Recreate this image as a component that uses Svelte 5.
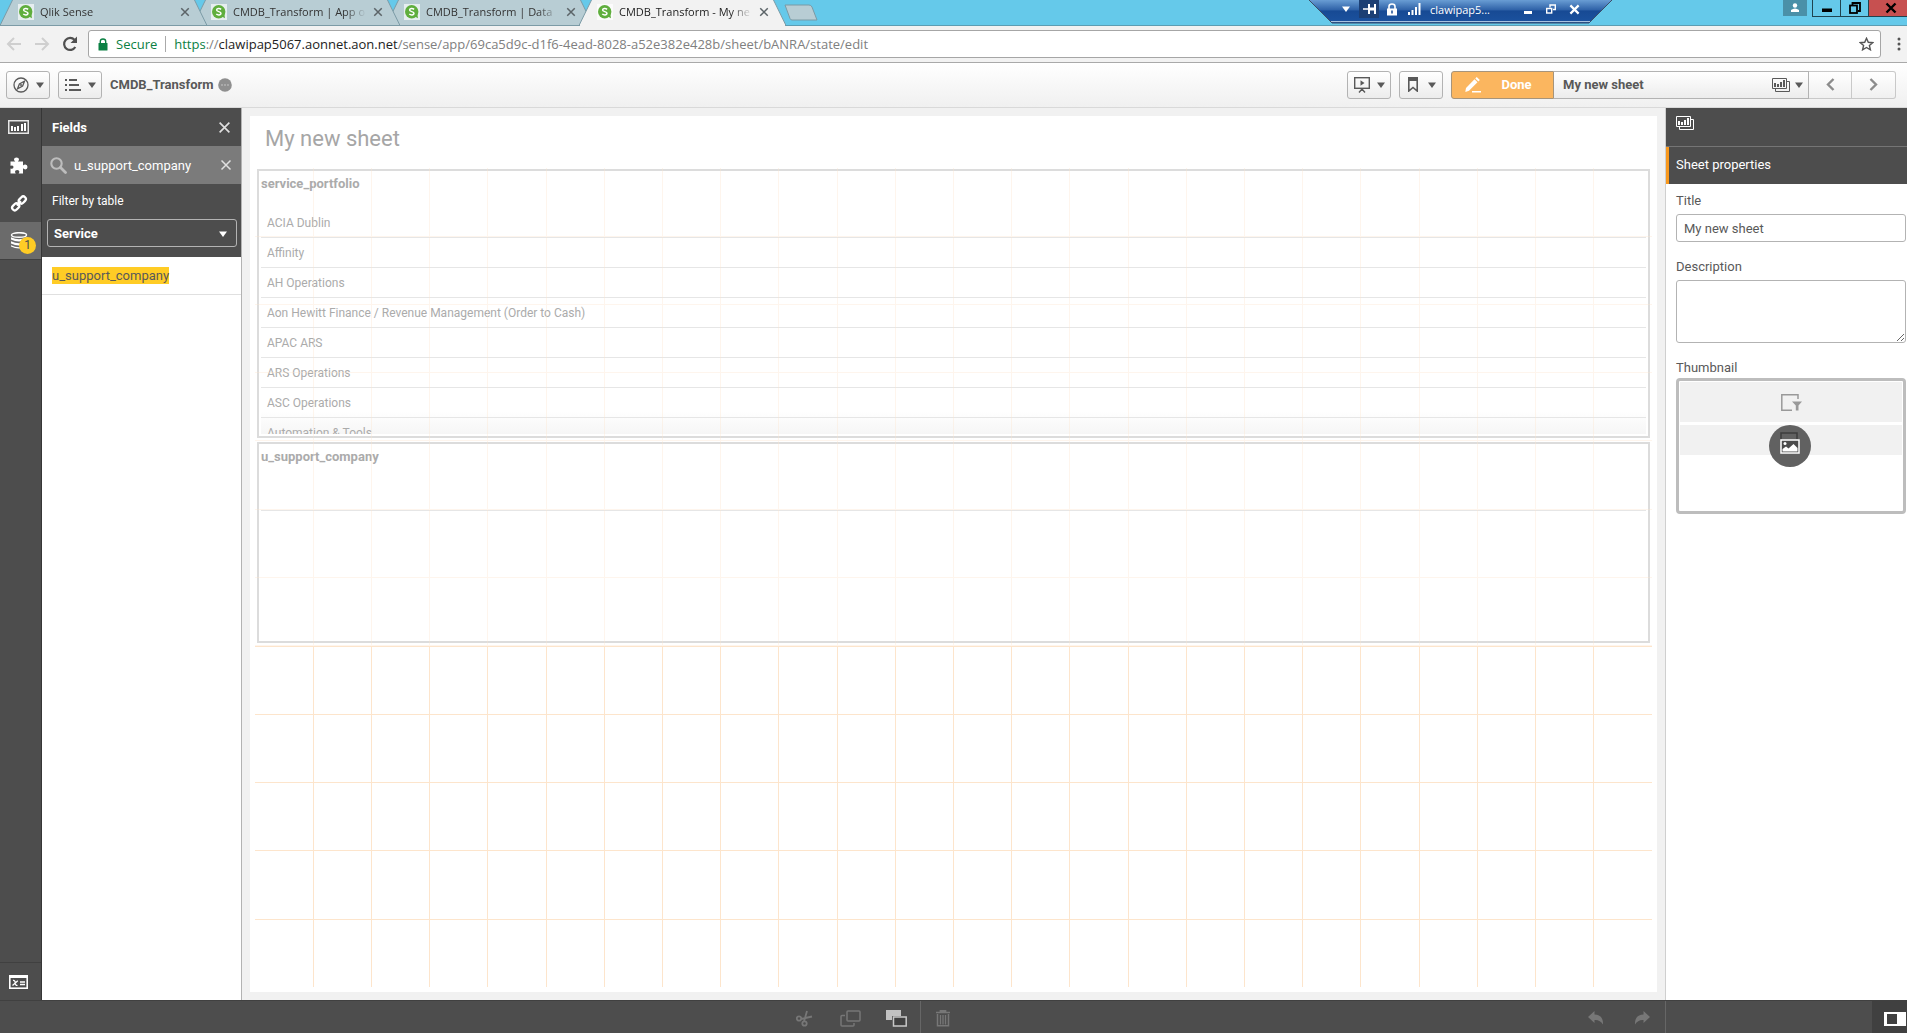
<script>
  const tabs = [
    { title: 'Qlik Sense', active: false },
    { title: 'CMDB_Transform | App o', active: false },
    { title: 'CMDB_Transform | Data', active: false },
    { title: 'CMDB_Transform - My ne', active: true }
  ];
  const portfolio = [
    'ACIA Dublin',
    'Affinity',
    'AH Operations',
    'Aon Hewitt Finance / Revenue Management (Order to Cash)',
    'APAC ARS',
    'ARS Operations',
    'ASC Operations',
    'Automation & Tools'
  ];
  const columns = 24;
  const rows = 12;
  const colLines = Array.from({ length: columns - 1 }, (_, i) => ((i + 1) * 100) / columns);
  const rowLines = Array.from({ length: rows - 1 }, (_, i) => ((i + 1) * 100) / rows);

  let search = $state('u_support_company');
  let title = $state('My new sheet');
  let description = $state('');
</script>

{#snippet caret()}
  <svg class="caret" width="8" height="6" viewBox="0 0 8 6"><path d="M0 0.5H8L4 6Z" fill="currentColor" /></svg>
{/snippet}

{#snippet cross(size, weight)}
  <svg width={size} height={size} viewBox="0 0 12 12"><path d="M1.500 1.500L10.500 10.500M10.500 1.500L1.500 10.500" stroke="currentColor" stroke-width={weight} fill="none" /></svg>
{/snippet}

{#snippet sheets()}
  <svg width="18" height="14" viewBox="0 0 18 14" fill="none" stroke="currentColor">
    <path d="M0.500 0.500H14.500V10.500H0.500Z" />
    <path d="M15 3.500H17.500V13.500H3.500V11" />
    <path d="M3 9V5M6 9V6M9 9V4M12 9V2" stroke-width="2" />
  </svg>
{/snippet}

<div class="app">
  <div class="tabstrip">
    <nav class="tabs" aria-label="Browser tabs">
      {#each tabs as tab}
        <div class="tab" class:active={tab.active}>
          <svg class="shape" viewBox="0 0 207 26" preserveAspectRatio="none">
            <path d="M0 25.500L13 -1H194L207 25.500Z" />
          </svg>
          <svg class="favicon" width="16" height="16" viewBox="0 0 16 16">
            <rect width="16" height="16" fill="#fff" opacity="0.650" />
            <circle cx="7.700" cy="7.700" r="6.700" fill="#5fae3d" />
            <path d="M9 11.500L14 14.300L13 8Z" fill="#5fae3d" />
            <path d="M10.100 5.300C8.700 4.200 5.600 4.200 5.600 6C5.600 8 10 7.200 10 9.300C10 11.300 6.700 11.300 5.300 10" stroke="#fff" stroke-width="1.500" fill="none" />
          </svg>
          <span class="tab-title">{tab.title}</span>
          <button class="tab-close" aria-label="Close tab">{@render cross(10, 1.8)}</button>
        </div>
      {/each}
      <button class="new-tab" aria-label="New tab">
        <svg width="34" height="17" viewBox="0 0 34 17"><path d="M1 1H25Q27 1 28 3L33 16H8Q6.500 16 6 14.500Z" fill="#b8cdd4" stroke="#7b9aa5" /></svg>
      </button>
    </nav>
    <div class="window-buttons">
      <button class="user" aria-label="Profile">
        <svg width="10" height="10" viewBox="0 0 10 10" fill="#fff"><circle cx="5" cy="2.500" r="2.200" /><path d="M1 9V7Q5 4 9 7V9Z" /></svg>
      </button>
      <button class="wb" aria-label="Minimize"><svg width="12" height="12" viewBox="0 0 12 12"><path d="M1 6.500H11V10H1Z" /></svg></button>
      <button class="wb" aria-label="Restore"><svg width="12" height="12" viewBox="0 0 12 12" fill="none" stroke="#000" stroke-width="1.800"><path d="M3.500 3V1H11V9H9" /><rect x="1" y="3.500" width="7" height="7.500" /></svg></button>
      <button class="wb red" aria-label="Close">{@render cross(12, 2.4)}</button>
    </div>
    <div class="remote">
      <svg class="remote-shape" viewBox="0 0 305 24" preserveAspectRatio="none">
        <defs>
          <linearGradient id="rdp" x1="0" y1="0" x2="0" y2="1">
            <stop offset="0" stop-color="#6fa3d8" />
            <stop offset="0.450" stop-color="#2f62a8" />
            <stop offset="0.500" stop-color="#174a94" />
            <stop offset="1" stop-color="#1b529f" />
          </linearGradient>
        </defs>
        <path d="M0 -1L24 23H281L305 -1Z" fill="url(#rdp)" stroke="#3c4d66" />
        <path d="M23 21.500H282" stroke="#a9c3e0" />
      </svg>
      <button class="rb" aria-label="Menu">{@render caret()}</button>
      <button class="rb pin" aria-label="Pin"><svg width="13" height="10" viewBox="0 0 13 10" stroke="#fff" fill="none"><path d="M0 5H5" stroke-width="1.500" /><path d="M6 0V10M12 0V10" stroke-width="2" /><path d="M6 5H12" stroke-width="3" /></svg></button>
      <svg width="12" height="13" viewBox="0 0 12 13"><path d="M3 6V3.500Q3 1 6 1Q9 1 9 3.500V6" stroke="#fff" stroke-width="1.600" fill="none" /><rect x="1" y="5.500" width="10" height="7" fill="#fff" /><path d="M6 7.500V10.500" stroke="#174a94" stroke-width="1.500" /></svg>
      <svg class="signal" width="13" height="12" viewBox="0 0 13 12" stroke="#fff" stroke-width="2"><path d="M1 12V9M4.500 12V7M8 12V4M11.500 12V0" /></svg>
      <span class="host">clawipap5...</span>
      <button class="rb" aria-label="Minimize session"><svg width="8" height="10" viewBox="0 0 8 10"><path d="M0 7H8V10H0Z" fill="#fff" /></svg></button>
      <button class="rb" aria-label="Restore session"><svg width="10" height="10" viewBox="0 0 10 10" fill="none" stroke="#fff" stroke-width="1.400"><path d="M4 3.500V1H9.300V5.500H7" /><rect x="0.700" y="4.500" width="5" height="4.500" /></svg></button>
      <button class="rb" aria-label="Close session">{@render cross(11, 2.4)}</button>
    </div>
  </div>

  <div class="addressbar">
    <button class="nav" aria-label="Back"><svg width="16" height="14" viewBox="0 0 16 14"><path d="M15 7H2M8 1L2 7L8 13" stroke="#cfcfcf" stroke-width="2" fill="none" /></svg></button>
    <button class="nav" aria-label="Forward"><svg width="16" height="14" viewBox="0 0 16 14"><path d="M1 7H14M8 1L14 7L8 13" stroke="#cfcfcf" stroke-width="2" fill="none" /></svg></button>
    <button class="nav" aria-label="Reload"><svg width="16" height="16" viewBox="0 0 16 16"><path d="M13.300 11A6 6 0 1 1 12.500 3.800" stroke="#505050" stroke-width="2.200" fill="none" /><path d="M15 0.500V7H8.500Z" fill="#505050" /></svg></button>
    <div class="url">
      <svg width="10" height="13" viewBox="0 0 10 13"><path d="M2.300 6V3.500Q2.300 1 5 1Q7.700 1 7.700 3.500V6" stroke="#0b8043" stroke-width="1.400" fill="none" /><rect x="0.500" y="5" width="9" height="7.500" rx="0.500" fill="#0b8043" /></svg>
      <span class="secure">Secure</span>
      <span class="address"><span class="green">https</span>://<span class="domain">clawipap5067.aonnet.aon.net</span>/sense/app/69ca5d9c-d1f6-4ead-8028-a52e382e428b/sheet/bANRA/state/edit</span>
      <button class="star" aria-label="Bookmark this page"><svg width="15" height="14" viewBox="0 0 15 14"><path d="M7.500 1.300L9.300 5.300L13.700 5.700L10.400 8.500L11.400 12.800L7.500 10.500L3.600 12.800L4.600 8.500L1.300 5.700L5.700 5.300Z" fill="none" stroke="#555" stroke-width="1.400" /></svg></button>
    </div>
    <button class="dots" aria-label="Browser menu"><svg width="4" height="14" viewBox="0 0 4 14" fill="#555"><circle cx="2" cy="2" r="1.500" /><circle cx="2" cy="7" r="1.500" /><circle cx="2" cy="12" r="1.500" /></svg></button>
  </div>

  <header class="toolbar">
    <button class="btn" aria-label="Navigation">
      <svg width="16" height="16" viewBox="0 0 16 16" fill="none" stroke="currentColor"><circle cx="8" cy="8" r="7" stroke-width="1.300" /><path d="M11.500 4.200L9.600 9L4.500 11.800L6.400 7Z" stroke-width="1.300" /><circle cx="8" cy="8" r="1" fill="currentColor" stroke="none" /></svg>
      {@render caret()}
    </button>
    <button class="btn" aria-label="Menu">
      <svg width="16" height="12" viewBox="0 0 16 12" stroke="currentColor" stroke-width="2"><path d="M0 1H2M0 6H2M0 11H2M4 1H12M4 6H14M4 11H16" /></svg>
      {@render caret()}
    </button>
    <h1>CMDB_Transform</h1>
    <svg class="more" width="14" height="14" viewBox="0 0 14 14"><circle cx="7" cy="7" r="6.800" fill="#8f8f8f" /><path d="M3 7H5M6 7H8M9 7H11" stroke="#c4c4c4" /></svg>
    <div class="actions">
      <button class="btn" aria-label="Storytelling">
        <svg width="16" height="16" viewBox="0 0 16 16" fill="none" stroke="currentColor" stroke-width="1.400"><rect x="0.700" y="0.700" width="14.600" height="10.600" /><path d="M8 11V13M5 15.500L8 12L11 15.500" /><path d="M6.500 3.300V8.700L10.500 6Z" fill="currentColor" stroke="none" /></svg>
        {@render caret()}
      </button>
      <button class="btn wide-gap" aria-label="Bookmarks">
        <svg width="10" height="15" viewBox="0 0 10 15"><path d="M0.800 0.800H9.200V14L5 10.500L0.800 14Z" fill="none" stroke="currentColor" stroke-width="1.600" /><path d="M0 0H10V4H0Z" fill="currentColor" /></svg>
        {@render caret()}
      </button>
      <div class="group">
        <button class="done">
          <svg width="17" height="16" viewBox="0 0 17 16" fill="#fff"><path d="M1 11L9.500 2.200L12.500 5.200L4 13.800L0.300 15Z" /><path d="M10.300 1.400L11.700 0L14.800 3L13.400 4.400Z" /><path d="M7 14H16V15.500H7Z" /></svg>
          <span>Done</span>
        </button>
        <button class="sheet-select">
          <span>My new sheet</span>
          {@render sheets()}
          {@render caret()}
        </button>
        <button class="step" aria-label="Previous sheet"><svg width="9" height="13" viewBox="0 0 9 13"><path d="M7.500 1L2 6.500L7.500 12" fill="none" stroke="#8c8c8c" stroke-width="2.400" /></svg></button>
        <button class="step" aria-label="Next sheet"><svg width="9" height="13" viewBox="0 0 9 13"><path d="M1.500 1L7 6.500L1.500 12" fill="none" stroke="#8c8c8c" stroke-width="2.400" /></svg></button>
      </div>
    </div>
  </header>

  <div class="workspace">
    <nav class="rail" aria-label="Assets">
      <button aria-label="Charts"><svg width="21" height="14" viewBox="0 0 21 14"><path d="M0.750 0.750H20.250V13.250H0.750Z" fill="none" stroke="#e6e6e6" stroke-width="1.500" /><path d="M4 11V6M7 11V7M10 11V6M14 11V4M17 11V3" stroke="#fff" stroke-width="2" /></svg></button>
      <button aria-label="Custom objects"><svg width="18" height="17" viewBox="0 0 18 17" fill="#fff"><path d="M0.500 4.500H5.300Q4 3.500 4 2.400Q4 0.400 6.500 0.400Q9 0.400 9 2.400Q9 3.500 7.800 4.500H13V8.600Q14 7.500 15.300 7.500Q17.500 7.500 17.500 10Q17.500 12.400 15.300 12.400Q14 12.400 13 11.300V16.500H8.600Q9.400 15.500 9.400 14.700Q9.400 13 7.200 13Q5 13 5 14.700Q5 15.500 5.800 16.500H0.500V11.500Q3.500 12.500 3.500 10Q3.500 7.700 0.500 8.700Z" /></svg></button>
      <button aria-label="Master items"><svg width="18" height="17" viewBox="0 0 18 17" fill="none" stroke="#fff" stroke-width="2.300"><rect x="-3.900" y="-2.600" width="7.800" height="5.200" rx="2.600" transform="translate(12.300 5) rotate(-45)" /><rect x="-3.900" y="-2.600" width="7.800" height="5.200" rx="2.600" transform="translate(5.700 11.800) rotate(-45)" /><path d="M6.800 10.500L11 6.300" /></svg></button>
      <button class="current" aria-label="Fields">
        <svg width="18" height="17" viewBox="0 0 18 17"><ellipse cx="9" cy="3" rx="7.500" ry="2.300" fill="none" stroke="#fff" stroke-width="1.500" /><path d="M1 5.300Q9 9.300 17 5.300V7.500Q9 11.500 1 7.500ZM1 9.300Q9 13.300 17 9.300V11.500Q9 15.500 1 11.500ZM1 13.300Q9 17 17 13.300V14.500Q9 18.500 1 14.500Z" fill="#fff" /></svg>
        <span class="badge">1</span>
      </button>
      <button class="variables" aria-label="Variables"><svg width="19" height="14" viewBox="0 0 19 14"><rect x="0.800" y="0.800" width="17.400" height="12.400" fill="none" stroke="#fff" stroke-width="1.600" /><path d="M0 0H19V3H0Z" fill="#fff" /><path d="M4 5.500Q6 5 6.300 8Q6.600 11 8.500 10.300M8.800 5.700L3.500 10.500M11 7H16M11 9.500H16" stroke="#fff" stroke-width="1.300" fill="none" /></svg></button>
    </nav>

    <aside class="fields">
      <div class="dark">
        <div class="fields-head">
          <h2>Fields</h2>
          <button aria-label="Close fields">{@render cross(13, 1.5)}</button>
        </div>
        <label class="search">
          <svg width="17" height="17" viewBox="0 0 17 17" fill="none" stroke="#bdbdbd"><circle cx="6.500" cy="6.500" r="5.200" stroke-width="2.100" /><path d="M10.500 10.500L15.500 15.500" stroke-width="2.800" stroke-linecap="round" /></svg>
          <input type="text" aria-label="Search fields" bind:value={search} />
          <button aria-label="Clear search">{@render cross(12, 1.5)}</button>
        </label>
        <label class="filter-label" for="table">Filter by table</label>
        <div class="select">
          <select id="table"><option>Service</option></select>
          {@render caret()}
        </div>
      </div>
      <ul>
        <li><mark>u_support_company</mark></li>
      </ul>
    </aside>

    <main>
      <section class="sheet">
        <h2>My new sheet</h2>
        <div class="canvas">
          <article class="object portfolio">
            <h3>service_portfolio</h3>
            <ul>
              {#each portfolio as item}
                <li>{item}</li>
              {/each}
            </ul>
          </article>
          <article class="object company">
            <h3>u_support_company</h3>
            <ul><li></li></ul>
          </article>
          <svg class="lines faint" shape-rendering="crispEdges">
            {#each colLines as x}<line x1="{x}%" x2="{x}%" y1="0" y2="100%" />{/each}
            {#each rowLines as y}<line y1="{y}%" y2="{y}%" x1="0" x2="100%" />{/each}
          </svg>
          <div class="free">
            <svg class="lines" shape-rendering="crispEdges">
              <line x1="0" x2="100%" y1="0" y2="0" />
              {#each colLines as x}<line x1="{x}%" x2="{x}%" y1="0" y2="100%" />{/each}
              {#each [20, 40, 60, 80] as y}<line y1="{y}%" y2="{y}%" x1="0" x2="100%" />{/each}
            </svg>
          </div>
        </div>
      </section>
    </main>

    <aside class="props">
      <div class="props-head">{@render sheets()}</div>
      <h2>Sheet properties</h2>
      <div class="form">
        <label for="title">Title</label>
        <input id="title" type="text" bind:value={title} />
        <label for="description">Description</label>
        <textarea id="description" bind:value={description}></textarea>
        <span class="label">Thumbnail</span>
        <button class="thumb" aria-label="Change thumbnail">
          <span class="block tall">
            <svg width="21" height="17" viewBox="0 0 21 17"><path d="M17 5V0.800H0.800V16.200H11" fill="none" stroke="#999" stroke-width="1.500" /><path d="M11 7.500H21L17.500 11.500V16.500H14.800V11.500Z" fill="#999" /></svg>
          </span>
          <span class="block"></span>
          <span class="disc">
            <svg width="20" height="22" viewBox="0 0 20 22"><path d="M1 7V1H17V7" fill="none" stroke="#3c3c3c" stroke-width="1.500" /><rect x="1" y="8" width="18" height="13" fill="#4a4a4a" stroke="#fff" stroke-width="1.500" /><circle cx="5" cy="11.500" r="1.500" fill="#fff" /><path d="M2.500 19.500V17L6 14.500L8.500 16.500L13.500 12L17.500 16V19.500Z" fill="#fff" /></svg>
          </span>
        </button>
      </div>
    </aside>
  </div>

  <footer>
    <div class="tools">
      <button aria-label="Cut"><svg width="17" height="17" viewBox="0 0 17 17" fill="none" stroke="#777" stroke-width="1.800"><circle cx="3" cy="8.500" r="2.200" /><circle cx="8.500" cy="13.500" r="2.200" /><path d="M5 9L16 6.500M8 11.500L11 1" /></svg></button>
      <button aria-label="Copy"><svg width="21" height="17" viewBox="0 0 21 17" fill="none" stroke="#777" stroke-width="1.500"><rect x="7" y="1" width="13" height="10" rx="1" /><path d="M5 5.500H2Q1 5.500 1 6.500V15Q1 16 2 16H13Q14 16 14 15V13" /></svg></button>
      <button aria-label="Paste"><svg width="21" height="17" viewBox="0 0 21 17"><path d="M0 0H15V6H6V10H0Z" fill="#c2c2c2" /><rect x="7.500" y="7" width="12.700" height="9" fill="#404040" stroke="#c8c8c8" stroke-width="1.500" /></svg></button>
      <button class="divided" aria-label="Delete"><svg width="14" height="17" viewBox="0 0 14 17" fill="none" stroke="#777"><path d="M0 2.500H14M4.500 2V0.800H9.500V2" stroke-width="1.700" /><path d="M1.500 4V15.800H12.500V4" stroke-width="1.500" /><path d="M4.500 5V14.500M7 5V14.500M9.500 5V14.500" stroke-width="1.300" /></svg></button>
      <span class="history">
        <button aria-label="Undo"><svg width="16" height="14" viewBox="0 0 16 14"><path d="M6.500 0V3.500Q15.500 4 15 13.500Q12 8.500 6.500 9V12L0 6Z" fill="#777" /></svg></button>
        <button aria-label="Redo"><svg width="16" height="14" viewBox="0 0 16 14"><path d="M9.500 0V3.500Q0.500 4 1 13.500Q4 8.500 9.500 9V12L16 6Z" fill="#777" /></svg></button>
      </span>
    </div>
    <div class="corner">
      <button aria-label="Toggle properties"><svg width="22" height="14" viewBox="0 0 22 14"><path d="M0 0H22V14H0Z" fill="#fff" /><path d="M3 2H13V12H3Z" fill="#404040" /></svg></button>
    </div>
  </footer>
</div>

<style>
  :global(body) { margin: 0; }
  .app {
    display: flex;
    flex-direction: column;
    min-height: 100vh;
    font-family: Roboto, "Liberation Sans", sans-serif;
    font-size: 13px;
    color: #595959;
    background: #fff;
    overflow: hidden;
  }
  .app :global(svg) { display: block; flex: none; }
  .app, .app * { box-sizing: border-box; }
  button {
    display: flex;
    align-items: center;
    justify-content: center;
    padding: 0;
    border: 0;
    background: none;
    font: inherit;
    color: inherit;
  }
  h1, h2, h3, ul { margin: 0; padding: 0; font-size: 13px; }
  ul { list-style: none; }

  .tabstrip {
    position: relative;
    display: flex;
    justify-content: space-between;
    height: 26px;
    background: #65c9ea;
    border-bottom: 1px solid #5c9db3;
    font: 11px "Open Sans", sans-serif;
    color: #333;
  }
  .tabs { display: flex; height: 26px; }
  .tab {
    position: relative;
    display: flex;
    align-items: center;
    width: 207px;
    margin-right: -14px;
    padding: 0 17px 3px 18px;
    z-index: 1;
  }
  .tab:nth-child(1) { z-index: 3; }
  .tab:nth-child(2) { z-index: 2; }
  .tab.active { z-index: 4; color: #222; }
  .shape { position: absolute; inset: 0; width: 100%; height: 100%; fill: #b8cdd4; stroke: #7c9ba6; z-index: -1; }
  .active .shape { fill: #f2f2f2; }
  .tab.active::after { content: ""; position: absolute; left: 1px; right: 1px; bottom: 0; height: 1px; background: #f2f2f2; }
  .tab-title {
    flex: 1;
    margin: 0 4px 0 6px;
    white-space: nowrap;
    mask-image: linear-gradient(to right, #000 82%, transparent 98%);
  }
  .tab-close { color: #5c6468; }
  .new-tab { margin: 4px 0 auto 12px; }

  .window-buttons { display: flex; height: 17px; }
  .user { width: 24px; height: 16px; margin-right: 5px; background: #4a90a8; }
  .wb { width: 28px; border: 1px solid #1f4450; border-top: 0; border-right: 0; color: #000; }
  .wb.red { width: 39px; padding-left: 6px; background: #c75050; }

  .remote {
    position: absolute;
    top: 0;
    right: 294px;
    display: flex;
    align-items: center;
    width: 305px;
    height: 24px;
    padding: 0 26px 6px 28px;
    color: #fff;
    font-size: 11px;
    z-index: 0;
  }
  .remote-shape { position: absolute; inset: 0; width: 100%; height: 100%; z-index: -1; }
  .rb { width: 20px; height: 18px; margin-right: 3px; }
  .rb.pin { background: #1c3f74; margin-right: 7px; }
  .signal { margin: 0 9px 0 10px; }
  .host { flex: 1; }

  .addressbar {
    display: flex;
    align-items: center;
    height: 37px;
    padding: 0 6px;
    background: #f2f2f2;
    border-bottom: 1px solid #a9a9a9;
    font: 13px "Open Sans", sans-serif;
  }
  .nav { width: 16px; margin-right: 12px; }
  .nav + .nav + .nav { margin-right: 10px; }
  .url {
    display: flex;
    flex: 1;
    align-items: center;
    height: 28px;
    padding: 0 6px 0 9px;
    background: #fff;
    border: 1px solid #a6a6a6;
    border-radius: 3px;
    color: #808080;
    white-space: nowrap;
  }
  .secure { margin-left: 8px; padding-right: 8px; border-right: 1px solid #aaa; line-height: 16px; color: #0b8043; }
  .address { flex: 1; margin-left: 8px; }
  .domain { color: #222; }
  .green { color: #0b8043; }
  .dots { width: 4px; margin-left: 16px; }

  .toolbar {
    display: flex;
    align-items: center;
    height: 45px;
    padding: 0 11px 1px 6px;
    background: linear-gradient(#fff, #f0f0f0);
    border-bottom: 1px solid #d9d9d9;
  }
  .btn {
    gap: 7px;
    width: 44px;
    height: 28px;
    margin-right: 8px;
    border: 1px solid #b3b3b3;
    border-radius: 3px;
    background: linear-gradient(#fff, #ececec);
  }
  .wide-gap { gap: 10px; padding-left: 2px; }
  .more { margin-left: 4px; }
  .actions { display: flex; margin-left: auto; }
  .group { display: flex; height: 28px; font-weight: 700; }
  .done {
    gap: 19px;
    width: 103px;
    padding-right: 8px;
    border: 1px solid #a6947b;
    border-radius: 3px 0 0 3px;
    background: #fbb65f;
    color: #fff;
    font-weight: 700;
  }
  .sheet-select {
    width: 255px;
    padding: 0 5px 0 9px;
    gap: 5px;
    border: 1px solid #b3b3b3;
    border-left: 0;
    background: linear-gradient(#fff, #ececec);
    font-weight: 700;
  }
  .sheet-select span { flex: 1; text-align: left; }
  .step { width: 43px; border: 1px solid #c9c9c9; border-left: 0; background: linear-gradient(#fff, #f0f0f0); }
  .step:last-child { border-radius: 0 3px 3px 0; width: 44px; }

  .workspace { display: flex; flex: 1; }
  .rail { display: flex; flex-direction: column; width: 42px; background: #4d4d4d; border-right: 1px solid #363636; }
  .rail button { position: relative; height: 38px; padding-right: 4px; }
  .rail .current { background: #6b6b6b; border-bottom: 1px solid #404040; }
  .rail .variables { margin-top: auto; border-top: 1px solid #404040; }
  .badge {
    position: absolute;
    left: 19px;
    top: 15px;
    width: 17px;
    height: 17px;
    border-radius: 50%;
    background: #ffcc25;
    color: #4d4d4d;
    font-size: 12px;
    line-height: 17px;
    text-align: center;
  }

  .fields { width: 200px; border-right: 1px solid #b3b3b3; }
  .dark { padding-bottom: 10px; background: #4d4d4d; color: #fff; }
  .fields-head { display: flex; align-items: center; justify-content: space-between; height: 38px; padding: 0 10px; }
  .fields-head button, .search button { color: #e0e0e0; }
  .search { display: flex; align-items: center; height: 38px; padding: 0 9px 0 8px; background: #7b7b7b; }
  .search input {
    flex: 1;
    min-width: 0;
    margin-left: 7px;
    padding: 0;
    border: 0;
    outline: 0;
    background: none;
    font: inherit;
    color: #fff;
  }
  .filter-label { display: block; padding-left: 10px; font-size: 12px; line-height: 35px; }
  .select { position: relative; margin: 0 4px 0 5px; }
  .select select {
    display: block;
    width: 100%;
    height: 28px;
    padding: 0 6px;
    appearance: none;
    border: 1px solid #b3b3b3;
    border-radius: 3px;
    background: #4d4d4d;
    color: #fff;
    font: 700 13px Roboto, sans-serif;
  }
  .select :global(.caret) { position: absolute; right: 10px; top: 12px; }
  .fields li { height: 38px; padding: 10px 10px 0; border-bottom: 1px solid #e0e0e0; }
  mark { display: inline-block; line-height: 17px; background: #ffcc25; color: #595959; }

  main { display: flex; flex: 1; min-width: 0; padding: 8px 8px; background: #f1f1f1; }
  .sheet { display: flex; flex: 1; flex-direction: column; min-width: 0; padding: 0 5px; background: #fff; }
  .sheet > h2 { height: 52px; padding-left: 10px; font-size: 22px; font-weight: 400; line-height: 46px; color: #a6a6a6; }
  .canvas {
    position: relative;
    display: grid;
    flex: 1;
    min-height: 600px;
    margin-bottom: 5px;
    grid-template-rows: repeat(12, minmax(0, 1fr));
    grid-template-columns: minmax(0, 1fr);
  }
  .object {
    contain: size;
    display: flex;
    flex-direction: column;
    margin: 1px 2px 3px;
    padding: 0 2px 2px;
    border: 2px solid #dcdcdc;
    overflow: hidden;
    color: #ababab;
  }
  .portfolio { grid-row: 1 / span 4; }
  .company { grid-row: 5 / span 3; }
  .portfolio ul { flex: 1; min-height: 0; overflow: hidden; background: linear-gradient(#fff 90%, #f6f6f6); }
  .object h3 { height: 37px; line-height: 26px; flex: none; }
  .object li { height: 30px; padding-left: 6px; border-bottom: 1px solid #e6e6e6; font-size: 12px; line-height: 30px; }
  .lines { position: absolute; inset: 0; width: 100%; height: 100%; pointer-events: none; stroke: #fde5cc; }
  .faint { opacity: 0.350; }
  .free { position: relative; grid-row: 8 / span 5; background: #fff; z-index: 1; }

  .props { width: 242px; border-left: 1px solid #cfcfcf; }
  .props-head { height: 39px; padding: 8px 10px; background: #4d4d4d; color: #fff; border-bottom: 1px solid #757575; }
  .props h2 { height: 37px; padding-left: 7px; border-left: 3px solid #f8981d; background: #4d4d4d; color: #fff; font-weight: 400; line-height: 36px; }
  .form { display: flex; flex-direction: column; padding: 8px 1px 0 10px; }
  .form label { height: 22px; line-height: 18px; }
  .label { height: 19px; line-height: 18px; }
  .form input, .form textarea {
    margin: 0 0 16px;
    padding: 0 7px;
    height: 28px;
    border: 1px solid #b3b3b3;
    border-radius: 3px;
    background: #fff;
    color: #595959;
    font: inherit;
  }
  .form textarea { height: 63px; resize: vertical; }
  .thumb {
    position: relative;
    flex-direction: column;
    justify-content: flex-start;
    gap: 3px;
    height: 136px;
    padding: 1px;
    border: 3px solid #bdbdbd;
    border-radius: 4px;
    background: #fff;
  }
  .block { width: 100%; height: 30px; background: #f1f1f1; }
  .tall { display: flex; justify-content: center; align-items: center; height: 40px; }
  .disc {
    position: absolute;
    left: calc(50% - 22px);
    top: calc(50% - 21px);
    display: flex;
    justify-content: center;
    padding-top: 7px;
    width: 42px;
    height: 42px;
    border-radius: 50%;
    background: #616161;
  }

  footer { display: flex; height: 33px; background: #4d4d4d; border-top: 1px solid #404040; }
  .tools { display: flex; flex: 1; padding-left: 41%; }
  .tools button { width: 46px; height: 100%; padding-top: 2px; }
  .tools .divided { border-left: 1px solid #666; }
  .history { display: flex; margin-left: auto; }
  .corner { display: flex; justify-content: flex-end; width: 242px; border-left: 1px solid #666; }
  .corner button { width: 35px; padding: 3px 0 0 10px; background: #404040; }
</style>
